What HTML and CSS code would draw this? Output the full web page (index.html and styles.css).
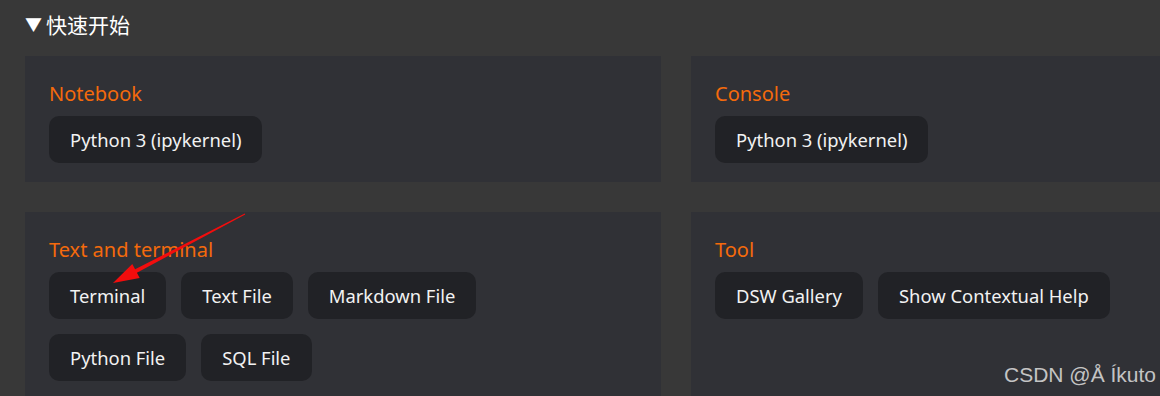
FILE: index.html
```html
<!DOCTYPE html>
<html lang="zh">
<head>
<meta charset="utf-8">
<title>快速开始</title>
<link rel="stylesheet" href="styles.css">
</head>
<body>
<div class="page">
  <div class="section-head"><span class="caret">▼</span>快速开始</div>
  <div class="grid">
    <div class="card">
      <div class="card-title">Notebook</div>
      <div class="btns">
        <div class="btn">Python 3 (ipykernel)</div>
      </div>
    </div>
    <div class="card">
      <div class="card-title">Console</div>
      <div class="btns">
        <div class="btn">Python 3 (ipykernel)</div>
      </div>
    </div>
    <div class="card">
      <div class="card-title">Text and terminal</div>
      <div class="btns">
        <div class="btn">Terminal</div>
        <div class="btn">Text File</div>
        <div class="btn">Markdown File</div>
        <div class="btn">Python File</div>
        <div class="btn">SQL File</div>
      </div>
    </div>
    <div class="card">
      <div class="card-title">Tool</div>
      <div class="btns">
        <div class="btn">DSW Gallery</div>
        <div class="btn">Show Contextual Help</div>
      </div>
    </div>
  </div>
  <svg class="arrow" width="1160" height="396" viewBox="0 0 1160 396">
    <polygon points="113,283 132.3,263.9 135.1,269.2 244.8,213.6 245.2,214.4 136.9,272.8 139.7,278.1" fill="#f20d0d"/>
  </svg>
  <div class="watermark">CSDN @Å Íkuto</div>
</div>
</body>
</html>
```
FILE: styles.css
```css
html, body {
  margin: 0;
  padding: 0;
  background: #383838;
  overflow: hidden;
}
.page {
  position: relative;
  width: 1160px;
  height: 396px;
  overflow: hidden;
  padding: 11px 0 0 25px;
  box-sizing: border-box;
  font-family: "Noto Sans", "Open Sans", sans-serif;
}
.section-head {
  color: #ffffff;
  font-family: "Noto Sans CJK SC", sans-serif;
  font-size: 21px;
  line-height: 26px;
  height: 26px;
  display: flex;
  align-items: center;
}
.caret {
  font-size: 17px;
  margin-right: 4px;
}
.grid {
  margin-top: 19px;
  display: grid;
  grid-template-columns: 636px 636px;
  gap: 30px;
}
.card {
  background: #303136;
  padding: 24px 24px 19px 24px;
}
.card-title {
  color: #f46a0c;
  font-size: 20px;
  line-height: 27px;
  margin-bottom: 9px;
}
.btns {
  display: flex;
  flex-wrap: wrap;
  gap: 15px;
  max-width: 480px;
}
.btn {
  background: #212226;
  color: #f2f2f2;
  font-size: 18.4px;
  line-height: 25px;
  padding: 11px 21px;
  border-radius: 10px;
  white-space: nowrap;
}
.arrow {
  position: absolute;
  left: 0;
  top: 0;
  pointer-events: none;
}
.watermark {
  position: absolute;
  left: 1004px;
  top: 363px;
  font-family: "Liberation Sans", Arial, sans-serif;
  font-size: 21px;
  line-height: 24px;
  color: #c4c4c4;
  white-space: nowrap;
}
```
